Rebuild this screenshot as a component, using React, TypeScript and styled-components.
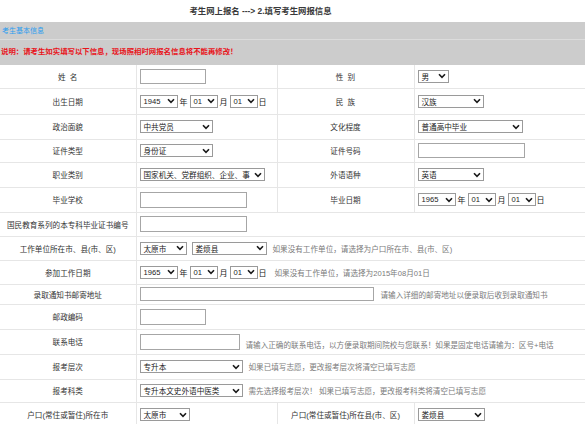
import React from 'react';
import styled, { createGlobalStyle } from 'styled-components';

const GlobalStyle = createGlobalStyle`
  body {
    margin: 0;
    background: #fff;
    font-family: "Liberation Sans", "Noto Sans CJK SC", sans-serif;
    color: #333;
  }
`;

const Page = styled.div`
  width: 585px;
  overflow: hidden;
`;

const Title = styled.div`
  height: 22px;
  line-height: 22px;
  padding-right: 64px;
  text-align: center;
  font-size: 8.4px;
  font-weight: bold;
  color: #3a3a3a;
`;

const SectionBar = styled.div`
  height: 17px;
  line-height: 17px;
  background: #cccccc;
  border-bottom: 1px solid #dcdcdc;
  padding-left: 2px;
  font-size: 7px;
  color: #2b9df0;
`;

const NoteBar = styled.div`
  height: 25px;
  line-height: 24px;
  background: #cccccc;
  padding-left: 1px;
  font-size: 7.4px;
  font-weight: bold;
  color: #e8141b;
`;

const FormTable = styled.table`
  width: 585px;
  border-collapse: collapse;
  table-layout: fixed;
`;

const Row = styled.tr<{ $h: number }>`
  height: ${({ $h }) => $h}px;
  border-bottom: 1px solid #e6e6e6;
`;

const Label = styled.td`
  padding: 0;
  text-align: center;
  font-size: 7.6px;
  color: #333;
  white-space: pre;
  border-right: 1px solid #e6e6e6;
`;

const Cell = styled.td`
  padding: 0 0 0 3px;
  border-right: 1px solid #e6e6e6;
  &:last-child {
    border-right: none;
  }
`;

const Line = styled.div<{ $bottom?: boolean }>`
  display: flex;
  align-items: ${({ $bottom }) => ($bottom ? 'flex-end' : 'center')};
  white-space: nowrap;
`;

const TextInput = styled.input<{ $w: number; $h: number }>`
  box-sizing: border-box;
  width: ${({ $w }) => $w}px;
  height: ${({ $h }) => $h}px;
  margin: 0;
  padding: 0 2px;
  border: 1px solid #a6a6a6;
  background: #fff;
  font-family: "Liberation Sans", "Noto Sans CJK SC", sans-serif;
  font-size: 8px;
  outline: none;
`;

const SelectBox = styled.div<{ $w: number }>`
  box-sizing: border-box;
  width: ${({ $w }) => $w}px;
  height: 13px;
  display: flex;
  align-items: center;
  justify-content: space-between;
  gap: 1px;
  border: 1px solid #9a9a9a;
  background: #fff;
  padding: 0 2px 0 3px;
  font-family: "Liberation Sans", "Noto Sans CJK SC", sans-serif;
  font-size: 7.6px;
  color: #222;
  overflow: hidden;
`;

const SelectText = styled.span`
  white-space: nowrap;
`;

const Unit = styled.span`
  font-size: 8px;
  color: #222;
  margin: 0 2px;
`;

const Hint = styled.span<{ $gap?: number }>`
  margin-left: ${({ $gap }) => $gap ?? 6}px;
  font-size: 7.6px;
  color: #7a7a7a;
`;

const Spacer = styled.span`
  width: 5px;
`;

const Chevron = () => (
  <svg width="8" height="6" viewBox="0 0 8 6" style={{ flex: 'none' }}>
    <path d="M1 1.2 L4 4.4 L7 1.2" fill="none" stroke="#1a1a1a" strokeWidth="1.6" />
  </svg>
);

const Select = ({ w, value }: { w: number; value: string }) => (
  <SelectBox $w={w}>
    <SelectText>{value}</SelectText>
    <Chevron />
  </SelectBox>
);

const DatePick = ({ year }: { year: string }) => (
  <>
    <Select w={38} value={year} />
    <Unit>年</Unit>
    <Select w={28} value="01" />
    <Unit>月</Unit>
    <Select w={28} value="01" />
    <Unit style={{ marginLeft: 1 }}>日</Unit>
  </>
);

export default function App() {
  return (
    <Page>
      <GlobalStyle />
      <Title>考生网上报名 ---&gt; 2.填写考生网报信息</Title>
      <SectionBar>考生基本信息</SectionBar>
      <NoteBar>说明：请考生如实填写以下信息，现场照相时网报名信息将不能再修改！</NoteBar>
      <FormTable>
        <colgroup>
          <col style={{ width: 136 }} />
          <col style={{ width: 141 }} />
          <col style={{ width: 137 }} />
          <col style={{ width: 171 }} />
        </colgroup>
        <tbody>
          <Row $h={23}>
            <Label>{'姓  名'}</Label>
            <Cell><Line><TextInput $w={66} $h={15} /></Line></Cell>
            <Label>{'性  别'}</Label>
            <Cell><Line><Select w={31} value="男" /></Line></Cell>
          </Row>
          <Row $h={26}>
            <Label>出生日期</Label>
            <Cell><Line><DatePick year="1945" /></Line></Cell>
            <Label>{'民  族'}</Label>
            <Cell><Line><Select w={66} value="汉族" /></Line></Cell>
          </Row>
          <Row $h={25}>
            <Label>政治面貌</Label>
            <Cell><Line><Select w={73} value="中共党员" /></Line></Cell>
            <Label>文化程度</Label>
            <Cell><Line><Select w={105} value="普通高中毕业" /></Line></Cell>
          </Row>
          <Row $h={23}>
            <Label>证件类型</Label>
            <Cell><Line><Select w={73} value="身份证" /></Line></Cell>
            <Label>证件号码</Label>
            <Cell><Line><TextInput $w={107} $h={15} /></Line></Cell>
          </Row>
          <Row $h={25}>
            <Label>职业类别</Label>
            <Cell><Line><Select w={125} value="国家机关、党群组织、企业、事" /></Line></Cell>
            <Label>外语语种</Label>
            <Cell><Line><Select w={66} value="英语" /></Line></Cell>
          </Row>
          <Row $h={25}>
            <Label>毕业学校</Label>
            <Cell><Line><TextInput $w={107} $h={16} /></Line></Cell>
            <Label>毕业日期</Label>
            <Cell><Line><DatePick year="1965" /></Line></Cell>
          </Row>
          <Row $h={24}>
            <Label>国民教育系列的本专科毕业证书编号</Label>
            <Cell colSpan={3}><Line><TextInput $w={107} $h={16} /></Line></Cell>
          </Row>
          <Row $h={24}>
            <Label>工作单位所在市、县(市、区)</Label>
            <Cell colSpan={3}>
              <Line>
                <Select w={47} value="太原市" />
                <Spacer />
                <Select w={75} value="娄烦县" />
                <Hint>如果没有工作单位，请选择为户口所在市、县(市、区)</Hint>
              </Line>
            </Cell>
          </Row>
          <Row $h={24}>
            <Label>参加工作日期</Label>
            <Cell colSpan={3}>
              <Line>
                <DatePick year="1965" />
                <Hint>如果没有工作单位，请选择为2015年08月01日</Hint>
              </Line>
            </Cell>
          </Row>
          <Row $h={20}>
            <Label>录取通知书邮寄地址</Label>
            <Cell colSpan={3}>
              <Line>
                <TextInput $w={234} $h={14} />
                <Hint $gap={7}>请输入详细的邮寄地址以便录取后收到录取通知书</Hint>
              </Line>
            </Cell>
          </Row>
          <Row $h={25}>
            <Label>邮政编码</Label>
            <Cell colSpan={3}><Line><TextInput $w={66} $h={16} /></Line></Cell>
          </Row>
          <Row $h={25}>
            <Label>联系电话</Label>
            <Cell colSpan={3}>
              <Line $bottom>
                <TextInput $w={100} $h={16} />
                <Hint>请输入正确的联系电话，以方便录取期间院校与您联系！如果是固定电话请输为：区号+电话</Hint>
              </Line>
            </Cell>
          </Row>
          <Row $h={25}>
            <Label>报考层次</Label>
            <Cell colSpan={3}>
              <Line>
                <Select w={103} value="专升本" />
                <Hint>如果已填写志愿，更改报考层次将清空已填写志愿</Hint>
              </Line>
            </Cell>
          </Row>
          <Row $h={23}>
            <Label>报考科类</Label>
            <Cell colSpan={3}>
              <Line>
                <Select w={103} value="专升本文史外语中医类" />
                <Hint>需先选择报考层次！ 如果已填写志愿，更改报考科类将清空已填写志愿</Hint>
              </Line>
            </Cell>
          </Row>
          <Row $h={25}>
            <Label>户口(常住或暂住)所在市</Label>
            <Cell><Line><Select w={50} value="太原市" /></Line></Cell>
            <Label>户口(常住或暂住)所在县(市、区)</Label>
            <Cell><Line><Select w={67} value="娄烦县" /></Line></Cell>
          </Row>
        </tbody>
      </FormTable>
    </Page>
  );
}
